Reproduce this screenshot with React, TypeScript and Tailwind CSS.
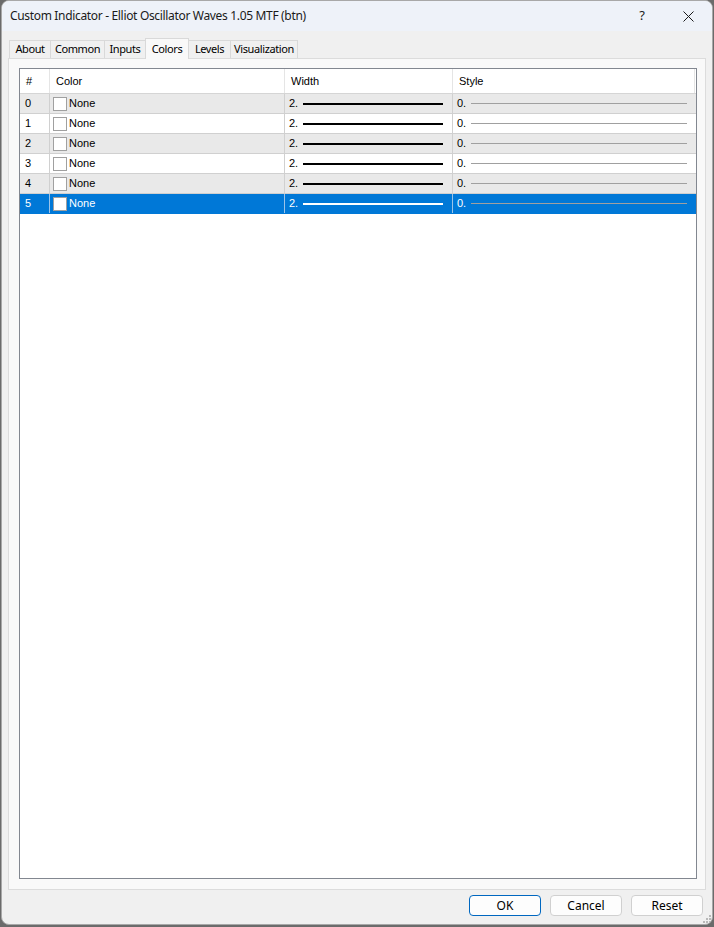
import React from "react";

const rows = [0, 1, 2, 3, 4, 5];
const tabs = [
  { label: "About", w: "w-[42px]" },
  { label: "Common", w: "w-[55px]" },
  { label: "Inputs", w: "w-[42px]" },
  { label: "Colors", w: "w-[44px]", active: true },
  { label: "Levels", w: "w-[43px]" },
  { label: "Visualization", w: "w-[68px]" },
];

export default function App() {
  return (
    <div className="w-[714px] h-[927px] bg-[#6b6b6b] overflow-hidden" style={{ fontFamily: '"Noto Sans", "Liberation Sans", sans-serif' }}>
      <div className="ml-[1px] w-[712px] h-[925px] bg-[#f0f0f0] rounded-[8px] border border-[#a8a8a8] flex flex-col overflow-hidden relative">
        {/* Title bar */}
        <div className="h-[30px] bg-[#eef2f9] flex items-center shrink-0">
          <div className="pl-[8px] text-[12px] text-[#1a1a1a] flex-1 tracking-[-0.33px]">
            Custom Indicator - Elliot Oscillator Waves 1.05 MTF (btn)
          </div>
          <div className="w-[46px] h-[30px] flex items-center justify-center text-[13px] text-[#1a1a1a]">?</div>
          <div className="w-[46px] h-[30px] flex items-center justify-center mr-[1px]">
            <svg width="11" height="11" viewBox="0 0 11 11">
              <path d="M0.5 0.5 L10.5 10.5 M10.5 0.5 L0.5 10.5" stroke="#1a1a1a" strokeWidth="1" />
            </svg>
          </div>
        </div>

        {/* Tabs */}
        <div className="flex items-end pl-[7px] h-[27px] shrink-0 relative z-10 tracking-[-0.4px]">
          {tabs.map((t, i) =>
            t.active ? (
              <div
                key={t.label}
                className={`${t.w} h-[21px] -mb-[1px] -ml-[1px] bg-[#f9f9f9] border border-[#d9d9d9] border-b-0 flex items-start justify-center pt-[2px] text-[11px] text-black`}
              >
                {t.label}
              </div>
            ) : (
              <div
                key={t.label}
                className={`${t.w} h-[18px] bg-[#f0f0f0] border border-[#d9d9d9] border-b-0 ${i === 0 ? "" : "-ml-[1px]"} flex items-center justify-center text-[11px] text-black`}
              >
                {t.label}
              </div>
            )
          )}
        </div>

        {/* Panel */}
        <div className="ml-[6px] w-[698px] h-[832px] bg-[#f9f9f9] border border-[#dcdcdc] pl-[10px] pt-[9px] pr-[8px] pb-[10px] shrink-0">
          <div className="w-full h-full bg-white border border-[#828790] overflow-hidden" style={{ fontFamily: '"Liberation Sans", Arial, sans-serif' }}>
            {/* Header */}
            <div className="flex h-[25px] border-b border-[#d5d5d5] text-[11px] text-black">
              <div className="w-[30px] shrink-0 border-r border-[#e5e5e5] flex items-center pl-[6px]">#</div>
              <div className="w-[235px] shrink-0 border-r border-[#e5e5e5] flex items-center pl-[6px]">Color</div>
              <div className="w-[168px] shrink-0 border-r border-[#e5e5e5] flex items-center pl-[6px]">Width</div>
              <div className="w-[242px] shrink-0 border-r border-[#e5e5e5] flex items-center pl-[6px]">Style</div>
            </div>
            {rows.map((r) => {
              const sel = r === 5;
              const bg = sel ? "bg-[#0078d7] text-white" : r % 2 === 0 ? "bg-[#e9e9e9] text-black" : "bg-white text-black";
              const vline = sel ? "border-[#9cc3e8]" : "border-[#d0d0d0]";
              return (
                <div key={r} className={`flex h-[20px] border-b ${sel ? "border-[#0078d7]" : "border-[#d0d0d0]"} ${bg} text-[11px]`}>
                  <div className={`w-[30px] shrink-0 border-r ${vline} flex items-center pl-[5px]`}>{r}</div>
                  <div className={`w-[235px] shrink-0 border-r ${vline} flex items-center pl-[3px]`}>
                    <div className="w-[14px] h-[14px] bg-white border border-[#a0a0a0]" />
                    <span className="ml-[2px]">None</span>
                  </div>
                  <div className={`w-[168px] shrink-0 border-r ${vline} flex items-center pl-[4px]`}>
                    <span className="w-[14px]">2.</span>
                    <div className={`w-[140px] h-[2px] ${sel ? "bg-white" : "bg-black"}`} />
                  </div>
                  <div className={`w-[242px] shrink-0 flex items-center pl-[4px]`}>
                    <span className="w-[14px]">0.</span>
                    <div className="w-[216px] h-[1px] bg-[#a0a0a0]" />
                  </div>
                </div>
              );
            })}
          </div>
        </div>

        {/* Buttons */}
        <div className="flex justify-end gap-[9px] pr-[9px] pt-[5px] text-[12px] text-black">
          <button className="w-[72px] h-[21px] rounded-[4px] bg-[#fdfdfd] border border-[#0067c0] flex items-center justify-center">OK</button>
          <button className="w-[72px] h-[21px] rounded-[4px] bg-[#fdfdfd] border border-[#d0d0d0] flex items-center justify-center">Cancel</button>
          <button className="w-[72px] h-[21px] rounded-[4px] bg-[#fdfdfd] border border-[#d0d0d0] flex items-center justify-center">Reset</button>
        </div>

        {/* Resize grip */}
        <div className="absolute right-[1px] bottom-[1px]">
          <svg width="8" height="8" viewBox="0 0 8 8">
            <rect x="6" y="0" width="2" height="2" fill="#b8b8b8" />
            <rect x="3" y="3" width="2" height="2" fill="#b8b8b8" />
            <rect x="6" y="3" width="2" height="2" fill="#b8b8b8" />
            <rect x="0" y="6" width="2" height="2" fill="#b8b8b8" />
            <rect x="3" y="6" width="2" height="2" fill="#b8b8b8" />
            <rect x="6" y="6" width="2" height="2" fill="#b8b8b8" />
          </svg>
        </div>
      </div>
    </div>
  );
}
